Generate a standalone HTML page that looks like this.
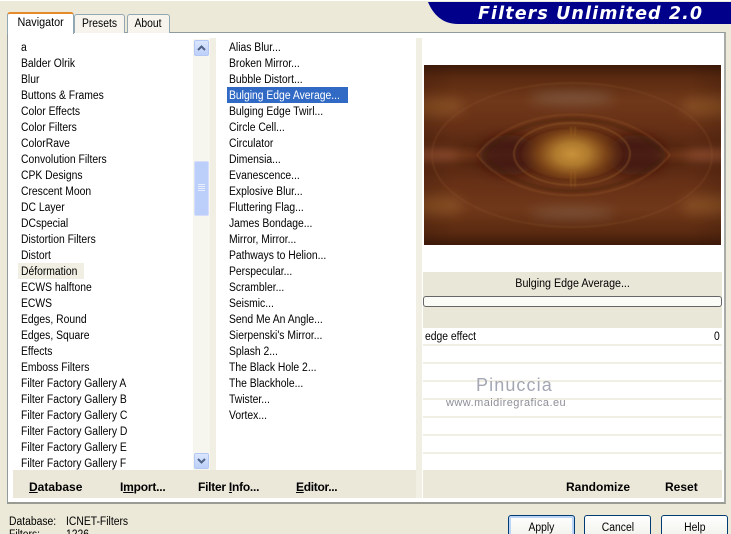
<!DOCTYPE html>
<html style="height:534px;overflow:hidden"><head><meta charset="utf-8">
<style>
html,body{margin:0;padding:0}
body{width:731px;height:534px;overflow:hidden;background:#ece9d8;font-family:"Liberation Sans",sans-serif;font-size:11.5px;color:#000}
#w{left:0;top:0;width:731px;height:534px;overflow:hidden;background:#ece9d8}
div{position:absolute;box-sizing:border-box}
.t{white-space:nowrap;line-height:16px;height:16px;margin-top:1px;transform:scaleX(.9);transform-origin:0 50%}
#l .t{left:21px}
#m .t{left:229px}
.b{font-weight:bold;font-size:12px;white-space:nowrap;line-height:16px}
.line{left:423px;width:299px;height:2px;background:#f1efe4}
.s{display:inline-block;transform:scaleX(.9);white-space:nowrap}
.btn{top:515px;height:24px;width:67px;border:1px solid #003c74;border-radius:3px;background:linear-gradient(#fff,#f0f0ea);text-align:center;line-height:24px}
.tab{background:#f6f4ec;border:1px solid #91a7b4;border-bottom:none;border-radius:3px 3px 0 0;text-align:center;line-height:19px}
</style></head><body>
<div id="w">
<div style="left:0;top:0;width:731px;height:1px;background:#fff"></div>

<svg style="position:absolute;left:428px;top:2px" width="303" height="22"><path d="M0 0H303V22H30C14 22 5 12 0 0Z" fill="#00008b"/></svg>
<div style="left:478px;top:2px;font:italic bold 17.5px 'DejaVu Sans',sans-serif;color:#fff;white-space:nowrap;line-height:24px;letter-spacing:1.1px">Filters Unlimited 2.0</div>

<div style="left:7px;top:32px;width:719px;height:472px;background:#fff;border:1px solid #919b9c;border-right:2px solid #a9aca6;border-bottom:2px solid #9a9c94"></div>
<div class="tab" style="left:74px;top:14px;width:51px;height:19px"><span class="s">Presets</span></div>
<div class="tab" style="left:127px;top:14px;width:43px;height:19px"><span class="s">About</span></div>
<div style="left:7px;top:12px;width:67px;height:22px;background:#fff;border:1px solid #91a7b4;border-top:2px solid #e68b2c;border-bottom:none;border-radius:3px 3px 0 0;text-align:center;line-height:18px"><span class="s" style="transform:scaleX(.94)">Navigator</span></div>

<div id="l">
<div class="t" style="top:39px">a</div>
<div class="t" style="top:55px">Balder Olrik</div>
<div class="t" style="top:71px">Blur</div>
<div class="t" style="top:87px">Buttons &amp; Frames</div>
<div class="t" style="top:103px">Color Effects</div>
<div class="t" style="top:119px">Color Filters</div>
<div class="t" style="top:135px">ColorRave</div>
<div class="t" style="top:151px">Convolution Filters</div>
<div class="t" style="top:167px">CPK Designs</div>
<div class="t" style="top:183px">Crescent Moon</div>
<div class="t" style="top:199px">DC Layer</div>
<div class="t" style="top:215px">DCspecial</div>
<div class="t" style="top:231px">Distortion Filters</div>
<div class="t" style="top:247px">Distort</div>
<div style="left:18px;top:263px;width:66px;height:16px;background:#f1efe3"></div>
<div class="t" style="top:263px">Déformation</div>
<div class="t" style="top:279px">ECWS halftone</div>
<div class="t" style="top:295px">ECWS</div>
<div class="t" style="top:311px">Edges, Round</div>
<div class="t" style="top:327px">Edges, Square</div>
<div class="t" style="top:343px">Effects</div>
<div class="t" style="top:359px">Emboss Filters</div>
<div class="t" style="top:375px">Filter Factory Gallery A</div>
<div class="t" style="top:391px">Filter Factory Gallery B</div>
<div class="t" style="top:407px">Filter Factory Gallery C</div>
<div class="t" style="top:423px">Filter Factory Gallery D</div>
<div class="t" style="top:439px">Filter Factory Gallery E</div>
<div class="t" style="top:455px">Filter Factory Gallery F</div>
</div>

<!-- scrollbar -->
<div style="left:193px;top:39px;width:17px;height:431px;background:#f6f5ee"></div>
<div style="left:210px;top:38px;width:6px;height:432px;background:#f1efe4"></div>
<div style="left:194px;top:40px;width:15px;height:16px;background:linear-gradient(#dbe7fd,#bccffa);border:1px solid #b4c8f6;border-radius:2px"></div>
<svg style="position:absolute;left:194px;top:40px" width="15" height="16"><path d="M4 10L7.5 6.5L11 10" fill="none" stroke="#4d6185" stroke-width="2"/></svg>
<div style="left:194px;top:161px;width:15px;height:55px;background:#bccffb;border:1px solid #d4defa;border-radius:2px"></div>
<div style="left:198px;top:184px;width:7px;height:1px;background:#e8eefc;box-shadow:0 2px #e8eefc,0 4px #e8eefc,0 6px #e8eefc"></div>
<div style="left:194px;top:453px;width:15px;height:16px;background:linear-gradient(#dbe7fd,#bccffa);border:1px solid #b4c8f6;border-radius:2px"></div>
<svg style="position:absolute;left:194px;top:453px" width="15" height="16"><path d="M4 6L7.5 9.5L11 6" fill="none" stroke="#4d6185" stroke-width="2"/></svg>

<div id="m">
<div class="t" style="top:39px">Alias Blur...</div>
<div class="t" style="top:55px">Broken Mirror...</div>
<div class="t" style="top:71px">Bubble Distort...</div>
<div style="left:227px;top:87px;width:121px;height:16px;background:#316ac5"></div>
<div class="t" style="top:87px;color:#fff">Bulging Edge Average...</div>
<div class="t" style="top:103px">Bulging Edge Twirl...</div>
<div class="t" style="top:119px">Circle Cell...</div>
<div class="t" style="top:135px">Circulator</div>
<div class="t" style="top:151px">Dimensia...</div>
<div class="t" style="top:167px">Evanescence...</div>
<div class="t" style="top:183px">Explosive Blur...</div>
<div class="t" style="top:199px">Fluttering Flag...</div>
<div class="t" style="top:215px">James Bondage...</div>
<div class="t" style="top:231px">Mirror, Mirror...</div>
<div class="t" style="top:247px">Pathways to Helion...</div>
<div class="t" style="top:263px">Perspecular...</div>
<div class="t" style="top:279px">Scrambler...</div>
<div class="t" style="top:295px">Seismic...</div>
<div class="t" style="top:311px">Send Me An Angle...</div>
<div class="t" style="top:327px">Sierpenski's Mirror...</div>
<div class="t" style="top:343px">Splash 2...</div>
<div class="t" style="top:359px">The Black Hole 2...</div>
<div class="t" style="top:375px">The Blackhole...</div>
<div class="t" style="top:391px">Twister...</div>
<div class="t" style="top:407px">Vortex...</div>
</div>
<div style="left:416px;top:38px;width:6px;height:460px;background:#f1efe4"></div>

<!-- preview -->
<svg style="position:absolute;left:424px;top:65px" width="297" height="180" viewBox="0 0 297 180">
<defs>
<radialGradient id="c" cx=".5" cy=".5" r=".5"><stop offset="0" stop-color="#c8923a"/><stop offset=".3" stop-color="#b07a2e"/><stop offset=".6" stop-color="#7e4618"/><stop offset="1" stop-color="#5a2810" stop-opacity="0"/></radialGradient>
<linearGradient id="v" x1="0" y1="0" x2="0" y2="1"><stop offset="0" stop-color="#3e1a0a"/><stop offset=".07" stop-color="#5a2a10"/><stop offset=".2" stop-color="#70381a"/><stop offset=".35" stop-color="#663016"/><stop offset=".45" stop-color="#572710"/><stop offset=".5" stop-color="#6a3418"/><stop offset=".55" stop-color="#572710"/><stop offset=".65" stop-color="#663016"/><stop offset=".8" stop-color="#70381a"/><stop offset=".93" stop-color="#5a2a10"/><stop offset="1" stop-color="#3e1a0a"/></linearGradient>
<linearGradient id="e" x1="0" y1="0" x2="1" y2="0"><stop offset="0" stop-color="#2e1206" stop-opacity=".2"/><stop offset=".1" stop-color="#2e1206" stop-opacity="0"/><stop offset=".9" stop-color="#2e1206" stop-opacity="0"/><stop offset="1" stop-color="#2e1206" stop-opacity=".2"/></linearGradient>
<filter id="bl"><feGaussianBlur stdDeviation=".8"/></filter>
<filter id="bl2"><feGaussianBlur stdDeviation="6"/></filter>
</defs>
<rect width="297" height="180" fill="url(#v)"/>
<g filter="url(#bl2)">
<ellipse cx="148" cy="33" rx="42" ry="5" fill="#8a705a" opacity=".65"/>
<ellipse cx="148" cy="148" rx="42" ry="5" fill="#8a705a" opacity=".55"/>
<ellipse cx="85" cy="90" rx="30" ry="20" fill="#3a160a" opacity=".65"/>
<ellipse cx="212" cy="90" rx="30" ry="20" fill="#3a160a" opacity=".65"/>
<ellipse cx="10" cy="90" rx="26" ry="4" fill="#a0583a"/>
<ellipse cx="287" cy="90" rx="26" ry="4" fill="#a0583a"/>
<ellipse cx="10" cy="42" rx="30" ry="9" fill="#8f5526" opacity=".8"/>
<ellipse cx="287" cy="42" rx="30" ry="9" fill="#8f5526" opacity=".8"/>
<ellipse cx="10" cy="140" rx="30" ry="9" fill="#8f5526" opacity=".8"/>
<ellipse cx="287" cy="140" rx="30" ry="9" fill="#8f5526" opacity=".8"/>
</g>
<rect width="297" height="180" fill="url(#e)"/>
<ellipse cx="148" cy="89" rx="55" ry="36" fill="url(#c)"/>
<g fill="none" filter="url(#bl)">
<path d="M53 90C95 36 202 36 246 90C202 144 95 144 53 90Z" stroke="#94592a" stroke-width="1" opacity=".6"/>
<path d="M60 90C100 42 196 42 240 90C196 138 100 138 60 90Z" stroke="#3a1608" stroke-width="3" opacity=".3"/>
<ellipse cx="148" cy="89" rx="58" ry="31" stroke="#a86c2e" stroke-width="1" opacity=".65"/>
<ellipse cx="148" cy="89" rx="52" ry="26" stroke="#3a1608" stroke-width="2" opacity=".2"/>
<ellipse cx="148" cy="90" rx="140" ry="72" stroke="#8e5a30" stroke-width="1.2" opacity=".35"/>
<path d="M147 62V72M151 62V72M147 106V122M151 106V122" stroke="#a86c2e" stroke-width="1" opacity=".5"/>
</g>
</svg>

<!-- params -->
<div style="left:423px;top:272px;width:299px;height:56px;background:#e9e7d8"></div>
<div style="left:423px;top:276px;width:299px;text-align:center;line-height:16px"><span class="s" style="transform:scaleX(.93)">Bulging Edge Average...</span></div>
<div style="left:423px;top:296px;width:299px;height:11px;background:#fbfbf7;border:1px solid #666;border-radius:3px"></div>
<div class="t" style="left:425px;top:328px">edge effect</div>
<div class="t" style="left:714px;top:328px">0</div>
<div class="line" style="top:344px"></div>
<div class="line" style="top:362px"></div>
<div class="line" style="top:380px"></div>
<div class="line" style="top:398px"></div>
<div class="line" style="top:416px"></div>
<div class="line" style="top:434px"></div>
<div class="line" style="top:452px"></div>

<div style="left:476px;top:375px;font-size:18px;line-height:20px;color:#a3a7b4;white-space:nowrap;letter-spacing:1.1px">Pinuccia</div>
<div style="left:446px;top:396px;font-size:11px;line-height:14px;color:#8d8f98;white-space:nowrap;letter-spacing:.45px">www.maidiregrafica.eu</div>

<!-- bottom strips -->
<div style="left:13px;top:470px;width:403px;height:28px;background:#ebe8da"></div>
<div style="left:423px;top:470px;width:299px;height:28px;background:#ebe8da"></div>
<div class="b" style="left:29px;top:479px"><u>D</u>atabase</div>
<div class="b" style="left:120px;top:479px;letter-spacing:-.2px">I<u>m</u>port...</div>
<div class="b" style="left:198px;top:479px;letter-spacing:-.25px">Filter <u>I</u>nfo...</div>
<div class="b" style="left:296px;top:479px;letter-spacing:-.3px"><u>E</u>ditor...</div>
<div class="b" style="left:566px;top:479px">Randomize</div>
<div class="b" style="left:665px;top:479px">Reset</div>

<!-- footer -->
<div class="t" style="left:9px;top:513px">Database:</div>
<div class="t" style="left:66px;top:513px">ICNET-Filters</div>
<div class="t" style="left:9px;top:526px">Filters:</div>
<div class="t" style="left:66px;top:526px">1226</div>
<div class="btn" style="left:508px;box-shadow:inset 0 0 0 2px #bcd4f6"><span class="s">Apply</span></div>
<div class="btn" style="left:584px"><span class="s">Cancel</span></div>
<div class="btn" style="left:661px"><span class="s">Help</span></div>
</div>
</body></html>
